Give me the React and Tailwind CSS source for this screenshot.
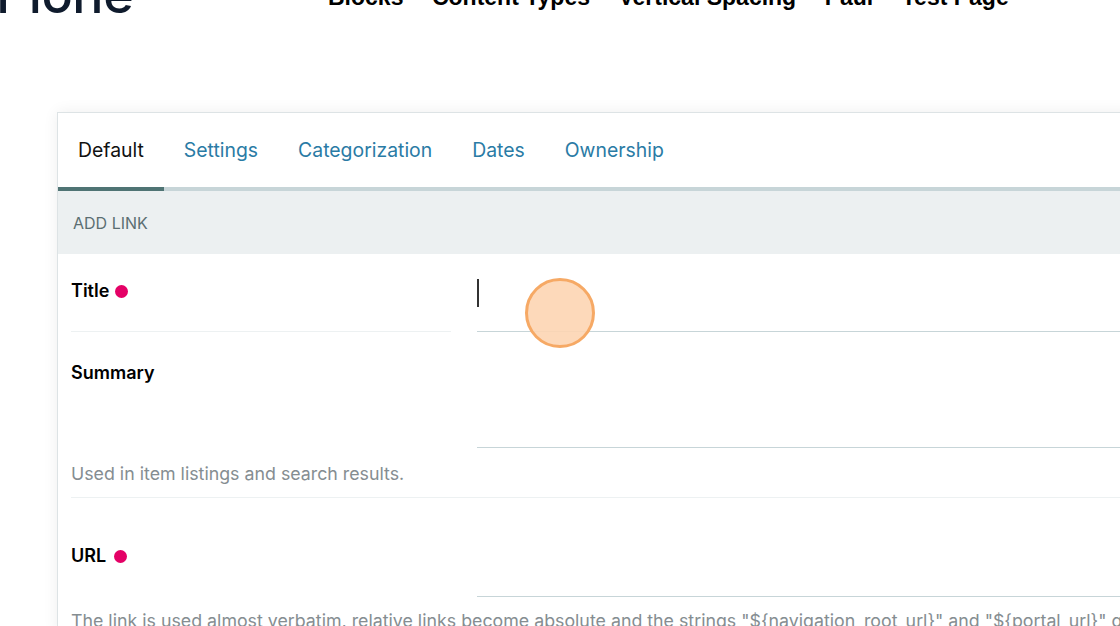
export default function App() {
  const tabs = ["Default", "Settings", "Categorization", "Dates", "Ownership"];
  const nav = ["Blocks", "Content Types", "Vertical Spacing", "Paul", "Test Page"];
  return (
    <div className="relative w-[1120px] h-[626px] overflow-hidden bg-white font-['Inter',sans-serif]">
      {/* header */}
      <div className="flex items-start h-[112px]">
        <div className="w-[328px] shrink-0">
          <div className="-ml-[4px] -mt-[33px] text-[52px] leading-[56px] font-medium text-[#0f1b2d] tracking-[-0.5px]">Plone</div>
        </div>
        <div className="-mt-[14px] flex gap-[28.5px] font-['Liberation_Sans',Arial,sans-serif] font-bold text-[23px] leading-[23px] text-black">
          {nav.map((n) => (
            <span key={n}>{n}</span>
          ))}
        </div>
      </div>

      {/* card */}
      <div className="ml-[57px] w-[1100px] border border-[#dde3e5] bg-white shadow-[0_0_14px_rgba(0,0,0,0.07)]">
        <div className="flex h-[78px] border-b-4 border-[#c7d5d8]">
          {tabs.map((t, i) => (
            <div
              key={t}
              className={
                i === 0
                  ? "flex items-center pt-[2px] px-5 h-[78px] border-b-4 border-[#4f7474] text-[19.4px] text-[#111]"
                  : "flex items-center pt-[2px] px-5 h-[78px] border-b-4 border-transparent text-[19.4px] text-[#2a7ba5]"
              }
            >
              {t}
            </div>
          ))}
        </div>
        <div className="h-[63px] bg-[#ecf0f1] flex items-center pl-[15px] text-[16px] text-[#5b6e72] uppercase">
          Add link
        </div>

        <div className="pl-[13px]">
          {/* Title */}
          <div className="flex gap-[26px]">
            <div className="w-[380px] h-[78px] border-b border-[#edf1f2] pt-[26px] shrink-0">
              <div className="flex items-center gap-[6px] text-[18px] leading-[22px] font-semibold text-black">
                Title <span className="w-[13px] h-[13px] rounded-full bg-[#e40166]" />
              </div>
            </div>
            <div className="flex-1 h-[78px] border-b border-[#c7d5d8] pt-[25px]">
              <div className="w-[2px] h-[28px] bg-[#333]" />
            </div>
          </div>

          {/* Summary */}
          <div className="border-b border-[#edf1f2] pb-[11px]">
            <div className="flex gap-[26px]">
              <div className="w-[380px] pt-[30px] shrink-0">
                <div className="text-[18px] leading-[22px] font-semibold text-black">Summary</div>
              </div>
              <div className="flex-1 h-[116px] border-b border-[#c7d5d8]" />
            </div>
            <div className="mt-[14px] text-[17.8px] leading-[24px] text-[#858d91]">
              Used in item listings and search results.
            </div>
          </div>

          {/* URL */}
          <div>
            <div className="flex gap-[26px]">
              <div className="w-[380px] pt-[47px] shrink-0">
                <div className="flex items-center gap-[8px] text-[18px] leading-[22px] font-semibold text-black">
                  URL <span className="w-[13px] h-[13px] rounded-full bg-[#e40166]" />
                </div>
              </div>
              <div className="flex-1 h-[99px] border-b border-[#c7d5d8]" />
            </div>
            <div className="mt-[12px] whitespace-nowrap text-[17.8px] leading-[24px] text-[#858d91]">
              The link is used almost verbatim, relative links become absolute and the strings "${"{"}navigation_root_url{"}"}" and "${"{"}portal_url{"}"}" get replaced with the real navigation_root_url or portal_url.
            </div>
          </div>
        </div>
      </div>

      {/* click indicator */}
      <div className="absolute left-[525px] top-[278px] w-[70px] h-[70px] rounded-full bg-[#fdd5b3]/90 border-[3px] border-[#f6a965]" />
    </div>
  );
}
